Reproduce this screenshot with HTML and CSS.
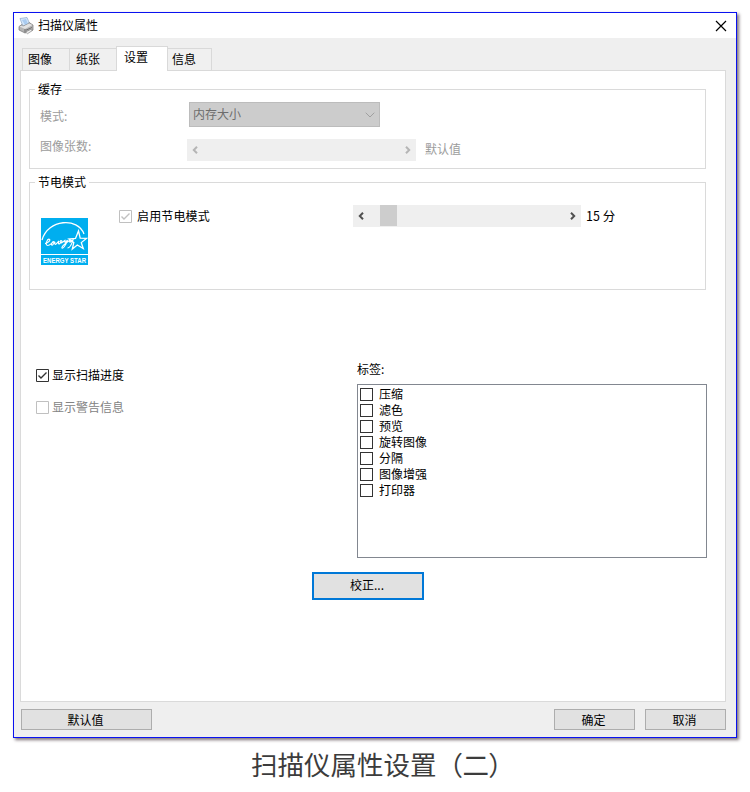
FILE: index.html
```html
<!DOCTYPE html>
<html lang="zh-CN">
<head>
<meta charset="utf-8">
<title>扫描仪属性</title>
<link rel="stylesheet" href="styles.css">
</head>
<body>
<div class="window">
  <header class="titlebar">
    <svg class="printer" width="16" height="18" viewBox="0 0 16 18">
      <path d="M2 1.500 9 .5l3 7-7 2z" fill="#d3e6fa" stroke="#8ea9c8" stroke-width=".7"/>
      <path d="M4 3l3 5 3-1-2-5z" fill="#a9cbf0"/>
      <path d="M1 9.500 4 7.500v2l6-2.500 1-1.500 4 2.500v5L7 16l-6-3z" fill="#b5b5b5" stroke="#777" stroke-width=".7"/>
      <path d="M1.500 9.500 7 12l7.500-4-3.500-1.500-6 3-1-1z" fill="#e2e2e2"/>
      <path d="M7 12v3.500M8 13.200l6-2.700" stroke="#666" stroke-width=".9"/>
      <path d="M7.500 15l5-2.500 2 1-5 3.200z" fill="#eee" stroke="#777" stroke-width=".6"/>
    </svg>
    <span class="title">扫描仪属性</span>
    <svg class="close" width="12" height="12" viewBox="0 0 12 12"><path d="M1 1l10 10M11 1L1 11" stroke="#000" stroke-width="1.200" fill="none"/></svg>
  </header>
  <nav class="tabs">
    <span class="tab first">图像</span><span class="tab">纸张</span><span class="tab active">设置</span><span class="tab last">信息</span>
  </nav>
  <main class="panel">
    <section class="group cache">
      <h2 class="legend">缓存</h2>
      <div class="row mode">
        <span class="label dim">模式:</span>
        <div class="select"><span>内存大小</span><svg width="10" height="6" viewBox="0 0 10 6"><path d="M.7.7 5 5 9.300.7" fill="none" stroke="#a0a0a0"/></svg></div>
      </div>
      <div class="row count">
        <span class="label dim">图像张数:</span>
        <div class="scroll off">
          <svg width="6" height="8" viewBox="0 0 6 8"><path d="M5 .8 1.800 4 5 7.200"/></svg>
          <svg width="6" height="8" viewBox="0 0 6 8"><path d="M1 .8 4.200 4 1 7.200"/></svg>
        </div>
        <span class="value dim">默认值</span>
      </div>
    </section>
    <section class="group power">
      <h2 class="legend">节电模式</h2>
      <svg class="energy" width="47" height="47" viewBox="0 0 47 47">
        <path d="M0 0h47v47H0z" fill="#00aeef"/>
        <path d="M1 22C7 1 37-1 43 16" fill="none" stroke="#fff" stroke-width="1.300"/>
        <path d="M37.500 13l1.700 7.200 6.300.2-5.200 4.200 2 6-6-3.600-5 4 1.500-6.400-4.800-3.500 6.500-.6z" fill="none" stroke="#fff" stroke-width="1.300"/>
        <path d="M4 25.500c3.500-.5 6-3.500 4.300-4.300-2-.6-5 6.300-1.500 6.300 2.500 0 4.200-3.500 6.500-3.800-2.500-.5-4 4-1.800 3.300l2.500-3.200c-.5 2 0 3.500 1 2.200l3-3c-1 2.200-.7 3.800.8 2.500 2.200-1 2.700-3 1.200-3-1.700.8-.5 3.700 1.500 1.700l3-2.200c-1 .5-1 2.500 0 2.200l2-2.200c-1.500 5-4.500 9-5.500 8s4-5 6-6.500l2.500-1.500c-1.500 1.500-1 3 .5 1.500l2-1.700c-1.500 5-4 8.200-5.500 8.200" fill="none" stroke="#fff" stroke-width="1.100"/>
        <path d="M0 36.500h47" stroke="#fff"/>
        <text x="2" y="45" textLength="43" lengthAdjust="spacingAndGlyphs">ENERGY STAR</text>
      </svg>
      <div class="check power-check">
        <svg class="box gray" width="13" height="13" viewBox="0 0 13 13"><path d="M.5.5h12v12H.5z"/><path class="tick" d="M2.500 6.500 5 9l5.500-5.500"/></svg>
        <span>启用节电模式</span>
      </div>
      <div class="scroll">
        <svg width="6" height="8" viewBox="0 0 6 8"><path d="M5 .8 1.800 4 5 7.200"/></svg>
        <i class="thumb"></i>
        <svg width="6" height="8" viewBox="0 0 6 8"><path d="M1 .8 4.200 4 1 7.200"/></svg>
      </div>
      <span class="minutes">15 分</span>
    </section>
    <div class="options">
      <div class="toggles">
        <div class="check"><svg class="box" width="13" height="13" viewBox="0 0 13 13"><path d="M.5.5h12v12H.5z"/><path class="tick" d="M2.500 6.500 5 9l5.500-5.500"/></svg><span>显示扫描进度</span></div>
        <div class="check off"><svg class="box gray" width="13" height="13" viewBox="0 0 13 13"><path d="M.5.5h12v12H.5z"/></svg><span>显示警告信息</span></div>
      </div>
      <div class="tags">
        <div class="tags-label">标签:</div>
        <ul class="list">
          <li><i></i>压缩</li>
          <li><i></i>滤色</li>
          <li><i></i>预览</li>
          <li><i></i>旋转图像</li>
          <li><i></i>分隔</li>
          <li><i></i>图像增强</li>
          <li><i></i>打印器</li>
        </ul>
      </div>
    </div>
    <button class="calibrate">校正...</button>
  </main>
  <footer class="footer">
    <button class="btn wide">默认值</button>
    <button class="btn ok">确定</button>
    <button class="btn">取消</button>
  </footer>
</div>
<p class="caption">扫描仪属性设置<span>（二）</span></p>
</body>
</html>
```
FILE: styles.css
```css
* { box-sizing: border-box; }
body {
  margin: 0;
  padding: 12px 13px 0;
  height: 792px;
  overflow: hidden;
  background: #fff;
  color: #000;
  font: 12px/16px "Noto Sans CJK SC", sans-serif;
}
.window {
  width: 724px;
  height: 726px;
  border: 1px solid #0a12f0;
  background: #efefef;
  box-shadow: 2px 2px 3px rgba(40, 20, 30, .6);
}
.titlebar {
  display: flex;
  align-items: center;
  height: 25px;
  padding: 0 9px 0 4px;
  background: #fff;
}
.title { margin-left: 4px; padding-bottom: 2px; }
.close { margin-left: auto; }
.tabs {
  display: flex;
  align-items: flex-end;
  height: 33px;
  margin-bottom: -1px;
  padding-left: 8px;
}
.tab {
  height: 23px;
  padding: 2px 0 0 6px;
  border: 1px solid #d9d9d9;
  border-right: 0;
  background: #f0f0f0;
  width: 47px;
}
.tab.first { padding-left: 5px; }
.tab.active {
  z-index: 1;
  width: 52px;
  height: 25px;
  padding: 2px 0 0 7px;
  border-right: 1px solid #d9d9d9;
  border-bottom: 0;
  background: #fff;
}
.tab.last {
  width: 44px;
  padding-left: 4px;
  border-left: 0;
  border-right: 1px solid #d9d9d9;
}
.panel {
  width: 706px;
  height: 632px;
  margin-left: 6px;
  padding: 18px 18px 0 8px;
  border: 1px solid #dadada;
  background: #fff;
}
.group {
  width: 677px;
  border: 1px solid #dadada;
}
.legend {
  width: max-content;
  height: 16px;
  margin: -9px 0 0 5px;
  padding: 0 3px;
  background: #fff;
  font: inherit;
}
.cache { height: 80px; }
.row { display: flex; align-items: center; }
.dim { color: #9c9c9c; }
.label { width: 149px; }
.mode { height: 25px; margin: 5px 0 0 10px; }
.count { height: 22px; margin: 12px 0 0 10px; }
.mode .label { padding-top: 3px; }
.count .label { width: 147px; padding-bottom: 8px; }
.select {
  display: flex;
  align-items: center;
  justify-content: space-between;
  width: 191px;
  height: 25px;
  padding: 0 4px 0 3px;
  border: 1px solid #bcbcbc;
  background: #ccc;
  color: #6d6d6d;
}
.select span { padding-bottom: 2px; }
.scroll {
  display: flex;
  align-items: center;
  width: 228px;
  height: 22px;
  padding: 0 5px;
  background: #efefef;
}
.scroll.off { width: 229px; }
.scroll svg { fill: none; stroke: #505050; stroke-width: 2; }
.scroll.off svg { stroke: #b5b5b5; }
.scroll svg:last-child { margin-left: auto; }
.thumb {
  width: 17px;
  height: 21px;
  margin: 0 0 1px 16px;
  background: #cdcdcd;
}
.value { margin-left: 9px; padding-bottom: 2px; }
.power {
  display: grid;
  grid-template-columns: 78px 234px 233px 1fr;
  grid-template-rows: 16px 22px 1fr;
  height: 108px;
  margin-top: 13px;
  padding-left: 11px;
}
.power .legend { grid-column: 1 / -1; margin-left: -6px; }
.power .energy { grid-column: 1; grid-row: 2 / 4; margin-top: 19px; }
.power .power-check, .power .scroll, .power .minutes { margin-top: 6px; grid-row: 2; }
.power .minutes { line-height: 21px; font-size: 12.500px; }
.energy text { fill: #fff; font: bold 8px "Liberation Sans Narrow", "Liberation Sans", sans-serif; }
.check { display: flex; align-items: center; height: 22px; }
.check span { margin-left: 3px; }
.power-check span { margin-left: 5px; letter-spacing: .15px; }
.box { fill: none; stroke: #333; }
.box.gray { stroke: #c0c0c0; }
.tick { stroke-width: 1.400; }
.off span { color: #838383; }
.options { display: flex; margin: 71px 0 0 7px; }
.toggles { width: 321px; padding-top: 3px; }
.toggles .check + .check { margin-top: 10px; }
.tags { margin-left: 1px; }
.tags-label { height: 23px; }
.list {
  width: 350px;
  height: 174px;
  margin: 0;
  padding: 1px 0 0 2px;
  border: 1px solid #828790;
  list-style: none;
}
.list li { display: flex; align-items: center; height: 16px; }
.list i { width: 13px; height: 13px; margin: 0 6px 0 0; border: 1px solid #333; }
button {
  display: block;
  padding: 0;
  color: #000;
  font: inherit;
}
.calibrate {
  width: 112px;
  height: 28px;
  margin: 14px 0 0 283px;
  padding: 0 2px 2px 0;
  border: 2px solid #0078d7;
  background: #e1e1e1;
}
.footer { display: flex; padding: 7px 10px 0 7px; }
.btn {
  width: 81px;
  height: 21px;
  padding-right: 2px;
  border: 1px solid #adadad;
  background: #e1e1e1;
  line-height: 17px;
}
.wide { width: 131px; }
.ok { margin: 0 10px 0 auto; }
.caption {
  margin: 6px 0 0 238px;
  color: #3c3c3c;
  font-size: 26.500px;
  line-height: 40px;
  white-space: nowrap;
}
.caption span { letter-spacing: -.6px; }
```
